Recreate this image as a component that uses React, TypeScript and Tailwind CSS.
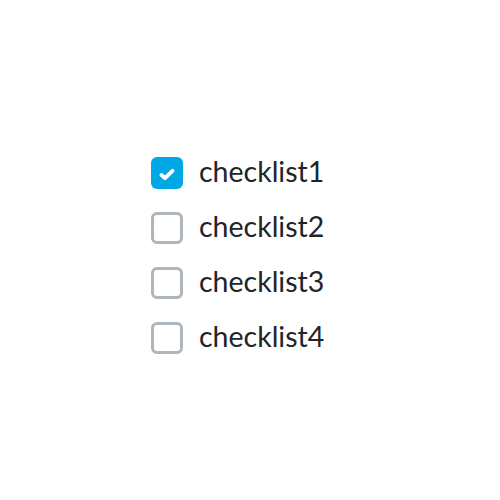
import React from "react";

const items = ["checklist1", "checklist2", "checklist3", "checklist4"];

export default function App() {
  return (
    <div className="w-[500px] h-[500px] bg-white pl-[151px] pt-[157px]" style={{ fontFamily: "Lato, 'Noto Sans', sans-serif" }}>
      <div className="flex flex-col gap-[23px]">
        {items.map((t, i) => (
          <label key={t} className="flex items-center gap-4 h-8">
            {i === 0 ? (
              <span className="w-8 h-8 rounded-[6px] bg-[#00a8e6] flex items-center justify-center">
                <svg width="16" height="13" viewBox="0 0 16 13" fill="none" className="mt-[2px]">
                  <path d="M2.5 7 L6 10.2 L13.5 2.8" stroke="white" strokeWidth="3.8" strokeLinecap="round" strokeLinejoin="round" />
                </svg>
              </span>
            ) : (
              <span className="w-8 h-8 rounded-[6px] border-[3px] border-[#adb5bd] bg-white" />
            )}
            <span className="text-[28.5px] leading-8 text-[#212529] -mt-[4px]">{t}</span>
          </label>
        ))}
      </div>
    </div>
  );
}
